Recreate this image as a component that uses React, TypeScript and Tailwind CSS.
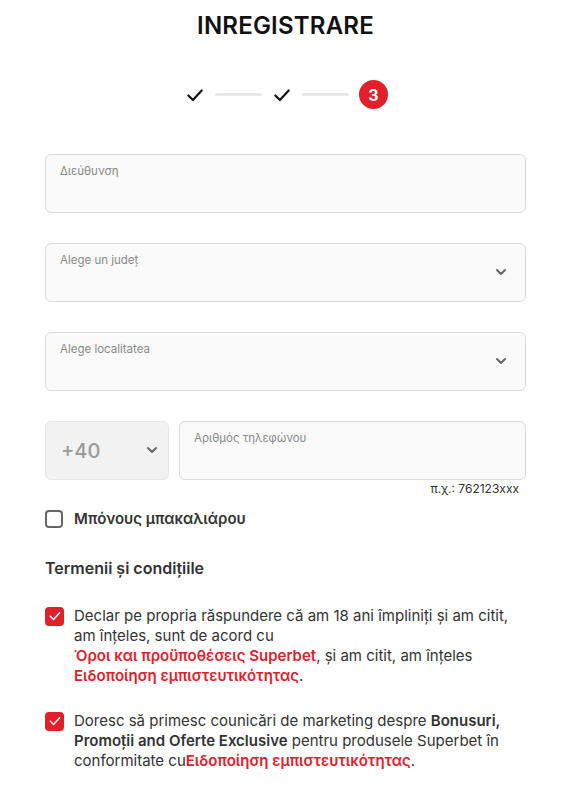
import React from 'react';

const Check: React.FC<{ className?: string }> = ({ className }) => (
  <svg viewBox="0 0 24 24" fill="none" stroke="currentColor" strokeWidth="2.6" strokeLinecap="round" strokeLinejoin="round" className={className}>
    <polyline points="4 12.5 9.5 18 20 6.5" />
  </svg>
);

const Chevron: React.FC = () => (
  <svg viewBox="0 0 24 24" fill="none" stroke="currentColor" strokeWidth="3" strokeLinecap="round" strokeLinejoin="round" className="h-4 w-4 text-[#666]">
    <polyline points="6 9 12 15 18 9" />
  </svg>
);

const Field: React.FC<{ label: string; select?: boolean; className?: string }> = ({ label, select, className = '' }) => (
  <div className={`relative h-[59px] rounded-md border border-[#dcdcdc] bg-[#fafafa] ${className}`}>
    <span className="absolute left-[14px] top-[8px] text-[11.5px] text-[#8a8a8a]">{label}</span>
    {select && (
      <span className="absolute right-[16px] top-[20px]">
        <Chevron />
      </span>
    )}
  </div>
);

const RedBox: React.FC = () => (
  <span className="mt-[1px] flex h-[19px] w-[19px] shrink-0 items-center justify-center rounded-[4px] bg-[#e1202b] text-white">
    <Check className="h-[14px] w-[14px]" />
  </span>
);

export default function App() {
  return (
    <div className="min-h-[790px] bg-white px-[45px] text-[#333]" style={{ fontFamily: 'Inter, "Noto Sans", sans-serif' }}>
      <h1 className="pt-[11px] text-center text-[24px] font-semibold leading-[30px] tracking-[0.2px] text-[#111]">INREGISTRARE</h1>

      <div className="mt-[39px] flex items-center justify-center pl-[2px]">
        <Check className="h-[20px] w-[20px] text-[#111]" />
        <span className="mx-[10px] h-[3px] w-[47px] rounded bg-[#e8e8e8]" />
        <Check className="h-[20px] w-[20px] text-[#111]" />
        <span className="mx-[10px] h-[3px] w-[47px] rounded bg-[#e8e8e8]" />
        <span className="flex h-[29px] w-[29px] items-center justify-center rounded-full bg-[#e1202b] text-[16px] font-bold text-white">3</span>
      </div>

      <div className="mt-[45px] flex flex-col gap-[30px]">
        <Field label="Διεύθυνση" />
        <Field label="Alege un județ" select />
        <Field label="Alege localitatea" select />
        <div>
          <div className="flex gap-[10px]">
            <div className="relative flex h-[59px] w-[124px] items-center rounded-md border border-[#e6e6e6] bg-[#f2f2f2] pl-[15px]">
              <span className="text-[20px] font-medium text-[#9a9a9a]">+40</span>
              <span className="absolute right-[8px] top-[20px]">
                <Chevron />
              </span>
            </div>
            <Field label="Αριθμός τηλεφώνου" className="flex-1" />
          </div>
          <div className="mt-[1px] pr-[7px] text-right text-[12px] leading-[16px] text-[#333]">π.χ.: 762123xxx</div>
        </div>
      </div>

      <label className="mt-[11px] flex items-center gap-[11px]">
        <span className="h-[18px] w-[18px] rounded-[4px] border-2 border-[#666] bg-white" />
        <span className="text-[15px] font-semibold text-[#333]">Μπόνους μπακαλιάρου</span>
      </label>

      <h2 className="mt-[27px] text-[16px] font-semibold leading-[20px] text-[#333]">Termenii și condițiile</h2>

      <div className="mt-[28px] flex gap-[10px] text-[15px] leading-[20px] text-[#333]">
        <RedBox />
        <p>
          Declar pe propria răspundere că am 18 ani împliniți și am citit, am înțeles, sunt de acord cu{' '}
          <br />
          <span className="font-semibold text-[#e1202b]">Όροι και προϋποθέσεις Superbet</span>, și am citit, am înțeles{' '}
          <span className="font-semibold text-[#e1202b]">Ειδοποίηση εμπιστευτικότητας</span>.
        </p>
      </div>

      <div className="mt-[25px] flex gap-[10px] text-[15px] leading-[20px] text-[#333]">
        <RedBox />
        <p>
          Doresc să primesc counicări de marketing despre <b className="font-semibold">Bonusuri, Promoții and Oferte Exclusive</b> pentru produsele Superbet în conformitate cu
          <span className="font-semibold text-[#e1202b]">Ειδοποίηση εμπιστευτικότητας</span>.
        </p>
      </div>
    </div>
  );
}
